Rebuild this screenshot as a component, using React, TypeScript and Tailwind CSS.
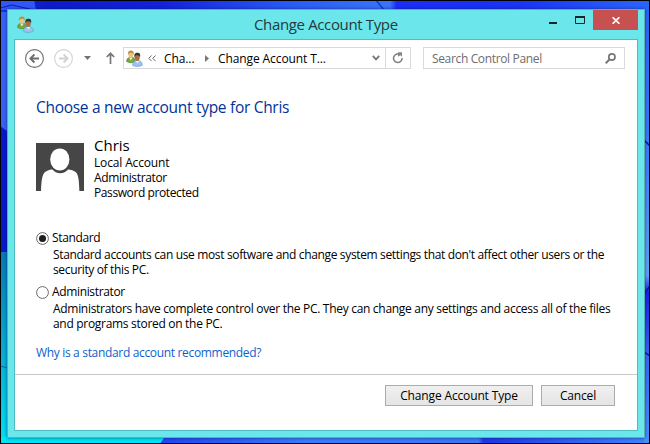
import React from "react";

function Wallpaper() {
  return (
    <svg className="absolute inset-0" width="650" height="444" viewBox="0 0 650 444">
      <defs>
        <linearGradient id="top" x1="0" x2="1">
          <stop offset="0" stopColor="#1834e8" />
          <stop offset="0.07" stopColor="#0c1cc8" />
          <stop offset="0.25" stopColor="#1322dc" />
          <stop offset="0.45" stopColor="#2a5cf4" />
          <stop offset="0.6" stopColor="#3a74fa" />
          <stop offset="0.61" stopColor="#1c2cf8" />
          <stop offset="0.8" stopColor="#1a34f4" />
          <stop offset="1" stopColor="#2a66fa" />
        </linearGradient>
        <linearGradient id="right" x1="0" x2="0" y1="0" y2="1">
          <stop offset="0" stopColor="#2a62fa" />
          <stop offset="0.3" stopColor="#3a78fa" />
          <stop offset="0.62" stopColor="#5ea2fb" />
          <stop offset="0.66" stopColor="#1a20e8" />
          <stop offset="0.8" stopColor="#3568f4" />
          <stop offset="1" stopColor="#4a90fa" />
        </linearGradient>
        <linearGradient id="teal" x1="0" x2="0" y1="0" y2="1">
          <stop offset="0" stopColor="#0678b4" />
          <stop offset="0.6" stopColor="#06b4d8" />
          <stop offset="1" stopColor="#00e0f4" />
        </linearGradient>
        <linearGradient id="bottom" x1="0" x2="1">
          <stop offset="0" stopColor="#2244f0" />
          <stop offset="0.3" stopColor="#3a7cf8" />
          <stop offset="0.65" stopColor="#3a78f4" />
          <stop offset="0.66" stopColor="#2036e8" />
          <stop offset="1" stopColor="#3f86fa" />
        </linearGradient>
      </defs>
      <rect width="650" height="444" fill="url(#top)" />
      <path d="M0 0H34L36 10H0Z" fill="#3158f6" />
      <path d="M0 8L12 5L34 10" fill="none" stroke="#0a1cb0" />
      <path d="M0 12H8V132L0 126Z" fill="#3860f4" />
      <path d="M0 126L8 132V252H0Z" fill="#0a18cc" />
      <rect y="252" width="8" height="192" fill="url(#teal)" />
      <path d="M0 366L8 368" stroke="#056a9c" />
      <path d="M0 437H165L160 444H0Z" fill="#02e4f4" />
      <path d="M165 437H650V444H160Z" fill="url(#bottom)" />
      <path d="M376 0L384 10M409 0L405 10" stroke="#123ccc" strokeWidth="1.5" />
      <rect x="644" width="6" height="444" fill="url(#right)" />
      <path d="M644 140L650 146M644 294L650 286M644 352L650 356" stroke="#0a1290" strokeWidth="1.5" />
      <rect x="0.5" y="0.5" width="649" height="443" fill="none" stroke="#000" />
    </svg>
  );
}

function UsersIcon() {
  return (
    <svg width="17" height="17" viewBox="0 0 17 17" className="shrink-0">
      <path d="M0.6 11.5C0.6 8.6 2 7.6 4 7.3H6.5C8.5 7.8 9.2 9 9.2 11.8C6.5 13.3 3 13 0.6 11.5Z" fill="#77a83e" stroke="#4f7f2b" strokeWidth=".6" />
      <path d="M3.2 7.4L4.8 10.4L6.6 7.4Z" fill="#eef3dc" />
      <ellipse cx="4.9" cy="4.5" rx="2.5" ry="3.3" fill="#edc184" />
      <path d="M2 5C1.6 1.6 3 .4 5 .4S8.2 1.8 7.8 5C7.3 3.3 6.6 2.8 5 2.7S2.7 3.4 2 5Z" fill="#b3933d" />
      <path d="M6.6 15.4C6.6 12.3 8 11.2 10 10.8H13C15.3 11.3 16.4 12.5 16.3 15.2C13.5 16.8 9.3 16.8 6.6 15.4Z" fill="#9dc4ee" stroke="#6693cc" strokeWidth=".6" />
      <path d="M9.7 10.9L11.5 13.6L13.2 10.9Z" fill="#e9f4ff" />
      <ellipse cx="11.2" cy="7.5" rx="2.5" ry="3.4" fill="#a8703f" />
      <path d="M8.5 7.4C7.8 4 9.3 2.7 11.4 2.7S14.8 4 14 7.6C13.6 5.9 13 5.2 11.4 5.2S9 5.8 8.5 7.4Z" fill="#343332" />
    </svg>
  );
}

function NavCircle({ forward = false }: { forward?: boolean }) {
  return (
    <svg width="19" height="19" viewBox="0 0 19 19" fill="none" stroke={forward ? "#d2d2d2" : "#6f6f6f"} className="shrink-0">
      <circle cx="9.5" cy="9.5" r="8.9" strokeWidth="1.1" />
      {forward ? (
        <path d="M5 9.5H13.4M9.6 5.5L13.6 9.5L9.6 13.5" strokeWidth="1.9" />
      ) : (
        <path d="M14 9.5H5.6M9.4 5.5L5.4 9.5L9.4 13.5" strokeWidth="1.9" />
      )}
    </svg>
  );
}

function TitleBar() {
  return (
    <div className="flex h-[29px] items-start">
      <div className="ml-[9px] mt-[6px] w-[17px]"><UsersIcon /></div>
      <div className="ml-[220px] w-[150px] whitespace-nowrap pt-[4px] text-[15px] leading-[20px] tracking-[-0.36px] text-[#243a3d]">
        Change Account Type
      </div>
      <svg className="ml-auto" width="50" height="20" viewBox="0 0 50 20">
        <rect x="6" y="12" width="8" height="2" fill="#16282a" />
        <path d="M32.5 6.5H41.5V13.5H32.5Z" fill="none" stroke="#16282a" />
        <rect x="32" y="6" width="10" height="2" fill="#16282a" />
      </svg>
      <div className="mr-[6px] flex h-5 w-[45px] items-center justify-center bg-[#c75050]">
        <svg width="8" height="7" viewBox="0 0 8 7" className="ml-px">
          <path d="M.6 .2L7.4 6.8M7.4 .2L.6 6.8" stroke="#fff" strokeWidth="1.7" />
        </svg>
      </div>
    </div>
  );
}

function Toolbar() {
  return (
    <div className="mt-[7px] flex h-[22px] items-center pl-[10px]">
      <NavCircle />
      <div className="ml-[10px]"><NavCircle forward /></div>
      <svg width="7" height="4" viewBox="0 0 7 4" className="ml-[11px]"><path d="M0 0H7L3.5 4Z" fill="#737373" /></svg>
      <svg width="9" height="12" viewBox="0 0 9 12" className="ml-[15px]"><path d="M4.5 12V1.5M.8 5L4.5 1.3L8.2 5" fill="none" stroke="#777" strokeWidth="1.7" /></svg>
      <div className="ml-[8px] flex h-[22px] w-[288px] items-center border border-[#d9d9d9]">
        <div className="ml-[2px] mr-[5px]"><UsersIcon /></div>
        <svg width="8" height="7" viewBox="0 0 8 7"><path d="M3.5 .5L.8 3.3L3.5 6.1M7.5 .5L4.8 3.3L7.5 6.1" fill="none" stroke="#666" /></svg>
        <span className="ml-[8px] w-[41px] whitespace-nowrap tracking-[-0.1px] text-black">Cha...</span>
        <svg width="4" height="7" viewBox="0 0 4 7"><path d="M0 0L4 3.5L0 7Z" fill="#777" /></svg>
        <span className="ml-[9px] w-[154px] whitespace-nowrap tracking-[-0.1px] text-black">Change Account T...</span>
        <svg width="8" height="6" viewBox="0 0 8 6"><path d="M.8 .9L4 4.4L7.2 .9" fill="none" stroke="#777" strokeWidth="1.8" /></svg>
        <div className="ml-[5px] flex h-full w-[24px] items-center justify-center border-l border-[#d9d9d9]">
          <svg width="12" height="12" viewBox="0 0 12 12">
            <path d="M8 2.5A4.3 4.3 0 1 0 10.1 6" fill="none" stroke="#858585" strokeWidth="1.6" />
            <path d="M6 .2H10V4.8L8.4 3.3L6 4.8Z" fill="#858585" />
          </svg>
        </div>
      </div>
      <div className="ml-[12px] flex h-[22px] w-[202px] items-center border border-[#d9d9d9] pl-[8px]">
        <span className="w-[173px] whitespace-nowrap tracking-[-0.35px] text-[#6d6d6d]">Search Control Panel</span>
        <svg width="11" height="11" viewBox="0 0 11 11"><circle cx="6.9" cy="4" r="3.1" fill="none" stroke="#777" strokeWidth="1.7" /><path d="M4.7 6.2L.7 10.3" stroke="#777" strokeWidth="2" /></svg>
      </div>
    </div>
  );
}

function Radio({ checked = false }: { checked?: boolean }) {
  return (
    <svg width="13" height="13" viewBox="0 0 13 13" className="mt-[2px] shrink-0">
      <circle cx="6.5" cy="6.5" r="5.9" fill="#fff" stroke="#686868" />
      {checked && <circle cx="6.5" cy="6.5" r="3.5" fill="#1d1d1d" />}
    </svg>
  );
}

export default function App() {
  return (
    <div className="relative h-[444px] w-[650px] overflow-hidden font-['Open_Sans','Noto_Sans',sans-serif] text-[12px] leading-[15px] text-black">
      <Wallpaper />
      <div className="relative px-[7px] pt-[9px]">
        <div className="h-[429px] w-[638px] border border-[#55b3b8] bg-[#6be7eb] shadow-[0_0_3px_rgba(0,20,90,0.6)]">
          <TitleBar />
          <div className="ml-[6px] flex h-[392px] w-[624px] flex-col border border-[#4fbdc4] bg-white">
            <Toolbar />
            <main className="flex-1 whitespace-nowrap pl-[21px]">
              <h1 className="mt-[27px] text-[15.5px] leading-[22px] tracking-[-0.3px] text-[#003399]">Choose a new account type for Chris</h1>
              <div className="mt-[17px] flex">
                <svg width="48" height="48" viewBox="0 0 48 48" className="mt-[8px]">
                  <rect width="48" height="48" fill="#464646" />
                  <path d="M5 48C5.4 38 6 31 9.5 28.8C12 27.2 14.5 26.6 16.4 26.6C20 31.4 28.5 31.4 32 26.6C35 26.6 37.5 27.5 39.6 29C42.5 31 43 38 43.4 48Z" fill="#fff" />
                  <ellipse cx="23.8" cy="16.4" rx="9.6" ry="11" fill="#fff" />
                </svg>
                <div className="ml-[10px]">
                  <div className="text-[15px] leading-[20px]">Chris</div>
                  <div className="tracking-[-0.15px]">Local Account</div>
                  <div className="tracking-[-0.35px]">Administrator</div>
                  <div className="tracking-[-0.4px]">Password protected</div>
                </div>
              </div>
              <div className="mt-[30px] flex h-[15px] items-start"><Radio checked /><span className="ml-[3px] tracking-[-0.35px]">Standard</span></div>
              <div className="ml-[17px] mt-[2px] tracking-[-0.35px]">Standard accounts can use most software and change system settings that don't affect other users or the<br />security of this PC.</div>
              <div className="mt-[7px] flex h-[15px] items-start"><Radio /><span className="ml-[3px] tracking-[-0.35px]">Administrator</span></div>
              <div className="ml-[17px] mt-[2px] tracking-[-0.3px]">Administrators have complete control over the PC. They can change any settings and access all of the files<br />and programs stored on the PC.</div>
              <div className="mt-[14px] tracking-[-0.33px] text-[#0f5fcc]">Why is a standard account recommended?</div>
            </main>
            <footer className="flex h-[56px] shrink-0 items-start border-t border-[#c8c8c8] pl-[370px] pt-[10px]">
              <button className="h-[21px] w-[148px] whitespace-nowrap border border-[#acacac] bg-linear-to-b from-[#f0f0f0] to-[#e5e5e5] leading-[18px] tracking-[-0.15px]">Change Account Type</button>
              <button className="ml-[8px] h-[21px] w-[74px] border border-[#acacac] bg-linear-to-b from-[#f0f0f0] to-[#e5e5e5] leading-[18px] tracking-[-0.15px]">Cancel</button>
            </footer>
          </div>
        </div>
      </div>
    </div>
  );
}
